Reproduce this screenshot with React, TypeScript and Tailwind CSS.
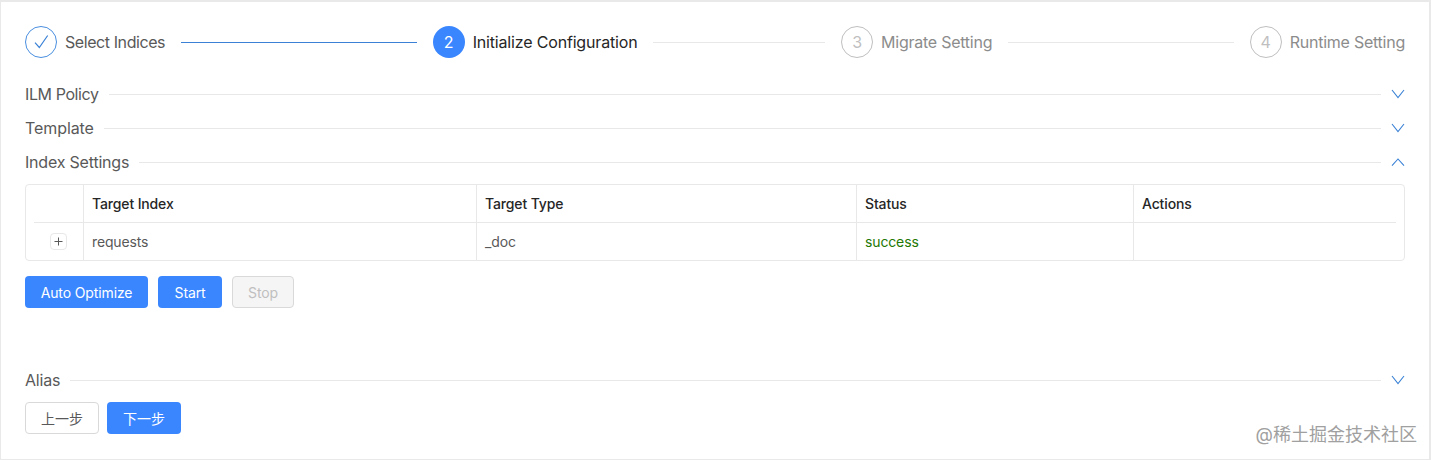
import { ReactNode } from 'react';

function Chevron({ up }: { up?: boolean }) {
  return (
    <svg width="14" height="14" viewBox="0 0 14 14" fill="none" stroke="#3b82d6" strokeWidth="1.1">
      <path d={up ? 'M1 10.7 L7 4 L13 10.7' : 'M1 3 L7 10.5 L13 3'} />
    </svg>
  );
}

function Section({ title, up, tracking }: { title: string; up?: boolean; tracking: string }) {
  return (
    <div className="flex h-[34px] items-center">
      <span className={`text-[16px] text-[#595959] ${tracking}`}>{title}</span>
      <div className="ml-[10px] mr-[10px] h-px flex-1 bg-[#e8e8e8]" />
      <Chevron up={up} />
    </div>
  );
}

function Step({ n, label, state, tracking }: { n: number; label: string; state: string; tracking: string }) {
  let circle: ReactNode;
  if (state === 'done') {
    circle = (
      <div className="flex h-8 w-8 items-center justify-center rounded-full border border-[#4a8fe0]">
        <svg width="16" height="14" viewBox="0 0 16 14" fill="none" stroke="#3b82d6" strokeWidth="1.2">
          <path d="M2 7.7 L6.3 12.5 L14.7 0.5" />
        </svg>
      </div>
    );
  } else if (state === 'active') {
    circle = (
      <div className="flex h-8 w-8 items-center justify-center rounded-full bg-[#3a86ff] text-[16px] text-white">{n}</div>
    );
  } else {
    circle = (
      <div className="flex h-8 w-8 items-center justify-center rounded-full border border-[#bfbfbf] text-[16px] text-[#bfbfbf]">
        {n}
      </div>
    );
  }
  const color = state === 'active' ? 'text-[#262626]' : state === 'done' ? 'text-[#595959]' : 'text-[#8c8c8c]';
  return (
    <div className="flex shrink-0 items-center gap-2">
      {circle}
      <span className={`text-[16px] ${tracking} ${color}`}>{label}</span>
    </div>
  );
}

export default function App() {
  return (
    <div className="h-[460px] w-[1431px] bg-[#e9e9e9] pb-px pl-px pr-[2px] pt-[2px] font-['Inter','Noto_Sans_CJK_SC',sans-serif]">
      <div className="relative h-[457px] bg-white px-6 pt-6">
        <div className="flex h-8 items-center">
          <Step n={1} label="Select Indices" state="done" tracking="tracking-[-0.42px]" />
          <div className="mx-4 h-px flex-[236] bg-[#3b82d6]" />
          <Step n={2} label="Initialize Configuration" state="active" tracking="tracking-[-0.17px]" />
          <div className="mx-4 h-px flex-[172] bg-[#e8e8e8]" />
          <Step n={3} label="Migrate Setting" state="wait" tracking="tracking-[-0.25px]" />
          <div className="mx-4 h-px flex-[226] bg-[#e8e8e8]" />
          <Step n={4} label="Runtime Setting" state="wait" tracking="tracking-[-0.25px]" />
        </div>

        <div className="mt-[19px]">
          <Section title="ILM Policy" tracking="tracking-[-0.4px]" />
          <Section title="Template" tracking="tracking-[-0.08px]" />
          <Section title="Index Settings" up tracking="tracking-[-0.2px]" />
        </div>

        <div className="mt-[5px] h-[77px] rounded border border-[#e8e8e8] px-2 text-[14px] tracking-[-0.14px]">
          <div className="flex h-[38px] border-b border-[#e8e8e8] font-medium text-[#262626]">
            <div className="w-[50px] border-r border-[#e8e8e8]" />
            <div className="flex w-[393px] items-center border-r border-[#e8e8e8] pl-2">Target Index</div>
            <div className="flex w-[380px] items-center border-r border-[#e8e8e8] pl-2">Target Type</div>
            <div className="flex w-[277px] items-center border-r border-[#e8e8e8] pl-2">Status</div>
            <div className="flex flex-1 items-center pl-2">Actions</div>
          </div>
          <div className="flex h-[37px] text-[#595959]">
            <div className="flex w-[50px] items-center justify-center border-r border-[#e8e8e8]">
              <div className="flex h-[17px] w-[17px] items-center justify-center rounded-sm border border-[#e8e8e8]">
                <svg width="9" height="9" viewBox="0 0 9 9" stroke="#595959" strokeWidth="1">
                  <path d="M0.5 4.5 H8.5 M4.5 0.5 V8.5" />
                </svg>
              </div>
            </div>
            <div className="flex w-[393px] items-center border-r border-[#e8e8e8] pl-2">requests</div>
            <div className="flex w-[380px] items-center border-r border-[#e8e8e8] pl-2">_doc</div>
            <div className="flex w-[277px] items-center border-r border-[#e8e8e8] pl-2 text-[#237804]">success</div>
            <div className="flex-1" />
          </div>
        </div>

        <div className="mt-[15px] flex gap-[10px] text-[14px] tracking-[-0.12px]">
          <button className="h-8 w-[123px] rounded bg-[#3a86ff] text-white">Auto Optimize</button>
          <button className="h-8 w-[64px] rounded bg-[#3a86ff] text-white">Start</button>
          <button className="h-8 w-[62px] rounded border border-[#d9d9d9] bg-[#f5f5f5] text-[#bfbfbf]">Stop</button>
        </div>

        <div className="mt-[55px]">
          <Section title="Alias" tracking="tracking-[-0.2px]" />
        </div>

        <div className="mt-[5px] flex gap-2 text-[14px]">
          <button className="h-8 w-[74px] rounded border border-[#d9d9d9] bg-white text-[#595959]">上一步</button>
          <button className="h-8 w-[74px] rounded bg-[#3a86ff] text-white">下一步</button>
        </div>

        <span className="absolute bottom-[11px] right-[12px] text-[18px] text-[#a0a0a0]">@稀土掘金技术社区</span>
      </div>
    </div>
  );
}
